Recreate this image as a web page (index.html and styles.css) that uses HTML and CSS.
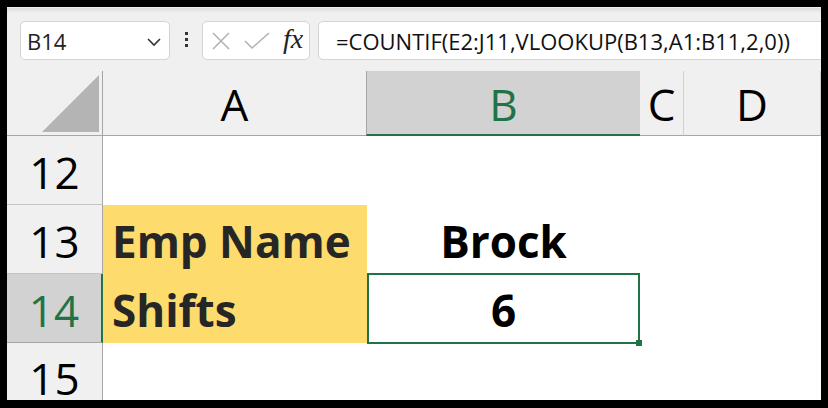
FILE: index.html
```html
<!DOCTYPE html>
<html lang="en">
<head>
    <meta charset="UTF-8">
    <meta name="viewport" content="width=device-width, initial-scale=1.0">
    <title>COUNTIF with VLOOKUP</title>
    <link rel="stylesheet" href="styles.css">
</head>
<body>
    <div class="frame">
        <!-- formula bar -->
        <div class="toolbar">
            <div class="namebox">
                <span>B14</span>
                <svg class="chevron" width="16" height="10" viewBox="0 0 16 10">
                    <polyline points="2,2 8,8 14,2" fill="none" stroke="#333" stroke-width="1.6"/>
                </svg>
            </div>
            <div class="dots">
                <span></span><span></span><span></span>
            </div>
            <div class="fxbox">
                <svg width="20" height="18" viewBox="0 0 20 18">
                    <path d="M2,1 L18,17 M18,1 L2,17" stroke="#b3b3b3" stroke-width="1.6"/>
                </svg>
                <svg class="check" width="26" height="18" viewBox="0 0 26 18">
                    <polyline points="1,9 8,16 25,1" fill="none" stroke="#b3b3b3" stroke-width="1.6"/>
                </svg>
                <span class="fx">fx</span>
            </div>
            <div class="formula">=COUNTIF(E2:J11,VLOOKUP(B13,A1:B11,2,0))</div>
        </div>

        <!-- sheet -->
        <div class="sheet">
            <div class="corner">
                <svg width="57" height="57" viewBox="0 0 57 57">
                    <polygon points="57,0 57,57 0,57" fill="#b4b4b4"/>
                </svg>
            </div>
            <div class="col-head">A</div>
            <div class="col-head active">B</div>
            <div class="col-head">C</div>
            <div class="col-head">D</div>

            <div class="row-head">12</div>
            <div class="cell"></div>
            <div class="cell"></div>
            <div class="cell"></div>
            <div class="cell"></div>

            <div class="row-head">13</div>
            <div class="cell label">Emp Name</div>
            <div class="cell value">Brock</div>
            <div class="cell"></div>
            <div class="cell"></div>

            <div class="row-head active">14</div>
            <div class="cell label">Shifts</div>
            <div class="cell value selected">6</div>
            <div class="cell"></div>
            <div class="cell"></div>

            <div class="row-head last">15</div>
            <div class="cell"></div>
            <div class="cell"></div>
            <div class="cell"></div>
            <div class="cell"></div>
        </div>
    </div>
</body>
</html>
```

FILE: styles.css
```css
body {
    margin: 0;
    padding: 0;
    background-color: #000;
    font-family: "Open Sans", "Noto Sans", sans-serif;
    color: #000;
}

.frame {
    width: 814px;
    height: 393px;
    margin: 7px 7px 8px 7px;
    overflow: hidden;
    background-color: #f0f0f0;
}

/* formula bar */
.toolbar {
    height: 64px;
    box-sizing: border-box;
    padding-top: 14px;
    display: flex;
    align-items: flex-start;
    background: linear-gradient(#ffffff 0, #dcdcdc 1px, #f0f0f0 6px);
}

.namebox,
.fxbox,
.formula {
    height: 39px;
    box-sizing: border-box;
    background-color: #fff;
    border: 1px solid #d4d4d4;
    border-radius: 5px;
    display: flex;
    align-items: center;
}

.namebox {
    width: 150px;
    margin-left: 13px;
    padding: 0 7px 0 6px;
    justify-content: space-between;
    font-size: 22px;
    color: #222;
}

.chevron {
    margin-top: 2px;
}

.dots {
    width: 32px;
    display: flex;
    flex-direction: column;
    align-items: center;
    gap: 3px;
    padding-top: 11px;
}

.dots span {
    width: 3px;
    height: 3px;
    background-color: #333;
}

.fxbox {
    width: 108px;
    padding-left: 8px;
}

.check {
    margin-left: 13px;
}

.fx {
    margin-left: 13px;
    font-family: "Liberation Serif", serif;
    font-style: italic;
    font-size: 28px;
    color: #222;
    margin-top: -4px;
}

.formula {
    flex: 1;
    margin-left: 8px;
    margin-right: -12px;
    padding-left: 17px;
    font-size: 22px;
    color: #111;
    white-space: nowrap;
}

/* grid - last row is cut by the window edge */
.sheet {
    display: grid;
    grid-template-columns: 96px 264px 273px 44px 1fr;
    grid-template-rows: 65px 69px 69px 69px 57px;
    background-color: #fff;
}

.corner,
.col-head,
.row-head {
    background-color: #f0f0f0;
    box-sizing: border-box;
    display: flex;
    align-items: center;
    justify-content: center;
    font-size: 44px;
    line-height: 1;
}

.corner {
    border-right: 1px solid #a6a6a6;
    border-bottom: 1px solid #a6a6a6;
    align-items: flex-end;
    justify-content: flex-end;
    padding: 0 3px 3px 0;
}

.col-head {
    border-bottom: 1px solid #a6a6a6;
    border-right: 1px solid #d0d0d0;
    padding-top: 2px;
}

.col-head.active {
    background-color: #d2d2d2;
    color: #217346;
    border-left: 1px solid #a6a6a6;
    border-right: none;
    border-bottom: 2px solid #217346;
    margin-left: -1px;
}

.row-head {
    border-right: 1px solid #a6a6a6;
    border-bottom: 1px solid #c4c4c4;
    padding-top: 4px;
}

.row-head.last {
    border-bottom: none;
    padding-top: 12px;
}

.row-head.active {
    background-color: #d2d2d2;
    color: #217346;
    border-right: 2px solid #217346;
    border-bottom-color: #a6a6a6;
}

.cell {
    display: flex;
    align-items: center;
    font-size: 44px;
    font-weight: 700;
    line-height: 1;
}

.cell.label {
    background-color: #fddb6d;
    color: #262626;
    padding-left: 9px;
    padding-top: 3px;
}

.cell.value {
    justify-content: center;
    padding-top: 3px;
}

.cell.selected {
    position: relative;
}

/* active cell outline and fill handle */
.cell.selected::after {
    content: "";
    position: absolute;
    top: -1px;
    left: 0;
    right: 0;
    bottom: -1px;
    border: 2px solid #217346;
}

.cell.selected::before {
    content: "";
    position: absolute;
    right: -2px;
    bottom: -3px;
    width: 6px;
    height: 6px;
    background-color: #217346;
    z-index: 1;
}
```
